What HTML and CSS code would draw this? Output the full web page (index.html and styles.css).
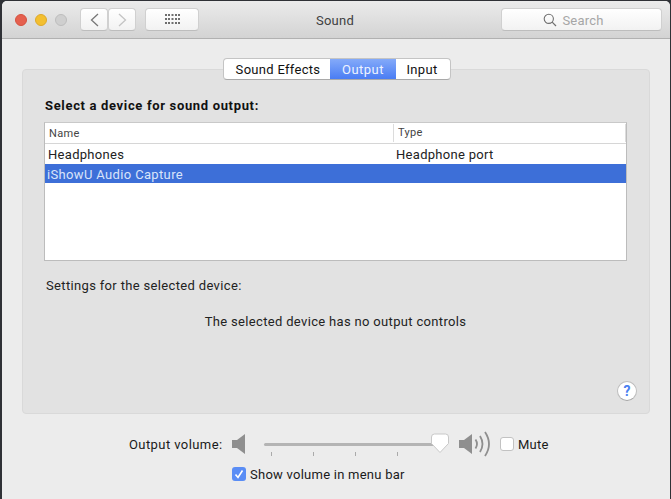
FILE: index.html
```html
<!DOCTYPE html>
<html lang="en">
<head>
<meta charset="utf-8">
<title>Sound</title>
<link rel="stylesheet" href="styles.css">
</head>
<body>
<div class="window">
  <header class="titlebar">
    <div class="lights">
      <span class="light red"></span>
      <span class="light yellow"></span>
      <span class="light grey"></span>
    </div>
    <div class="nav">
      <button class="tool nav-btn"><svg width="9" height="14" viewBox="0 0 9 14"><path d="M8 1 1.5 7 8 13" fill="none" stroke="#777" stroke-width="1.3"/></svg></button>
      <button class="tool nav-btn"><svg width="9" height="14" viewBox="0 0 9 14"><path d="M1 1 7.5 7 1 13" fill="none" stroke="#c4c4c4" stroke-width="1.3"/></svg></button>
    </div>
    <button class="tool grid-btn"><svg width="15" height="11" viewBox="0 0 15 11" fill="#6e6e6e"><rect x="0" y="0" width="2" height="2"/><rect x="3" y="0" width="2" height="2"/><rect x="6.5" y="0" width="2" height="2"/><rect x="10" y="0" width="2" height="2"/><rect x="13" y="0" width="2" height="2"/><rect x="0" y="4" width="2" height="2"/><rect x="3" y="4" width="2" height="2"/><rect x="6.5" y="4" width="2" height="2"/><rect x="10" y="4" width="2" height="2"/><rect x="13" y="4" width="2" height="2"/><rect x="0" y="8" width="2" height="2"/><rect x="3" y="8" width="2" height="2"/><rect x="6.5" y="8" width="2" height="2"/><rect x="10" y="8" width="2" height="2"/><rect x="13" y="8" width="2" height="2"/></svg></button>
    <div class="title">Sound</div>
    <div class="tool search">
      <svg width="14" height="14" viewBox="0 0 14 14"><circle cx="5.8" cy="5.8" r="4.6" fill="none" stroke="#6f6f6f" stroke-width="1.1"/><path d="M9.2 9.2 13 13" stroke="#6f6f6f" stroke-width="1.2"/></svg>
      <span>Search</span>
    </div>
  </header>

  <main class="content">
    <nav class="tabs">
      <span class="tab">Sound Effects</span>
      <span class="tab active">Output</span>
      <span class="tab">Input</span>
    </nav>
    <section class="panel">
      <h2 class="heading">Select a device for sound output:</h2>
      <div class="table">
        <div class="row head">
          <div class="col-name">Name</div>
          <div class="col-type">Type</div>
        </div>
        <div class="row item">
          <div class="col-name">Headphones</div>
          <div class="col-type">Headphone port</div>
        </div>
        <div class="row item selected">
          <div class="col-name">iShowU Audio Capture</div>
          <div class="col-type"></div>
        </div>
      </div>
      <p class="settings">Settings for the selected device:</p>
      <p class="none">The selected device has no output controls</p>
      <div class="help-row"><span class="help">?</span></div>
    </section>

    <div class="volume">
      <span class="vol-label">Output volume:</span>
      <svg class="spk-low" width="14" height="20" viewBox="0 0 14 20"><path d="M0 6h5l8-6v20l-8-6H0z" fill="#8f8f8f"/></svg>
      <div class="slider">
        <div class="track"></div>
        <div class="ticks"><i></i><i></i><i></i><i></i></div>
        <svg class="thumb" width="20" height="21" viewBox="0 0 20 21"><path d="M4.500 1h11A3 3 0 0 1 18.500 4V10.500l-8.500 9-8.500-9V4A3 3 0 0 1 4.500 1z" fill="#fff" stroke="#c8c8c8"/></svg>
      </div>
      <svg class="spk-high" width="32" height="26" viewBox="0 0 32 26"><path d="M0 9h5l8-6v20l-8-6H0z" fill="#8f8f8f"/><path d="M16.500 8.500q3 4.500 0 9M21 5q5 8 0 16M26 1q8 12 0 24" fill="none" stroke="#8f8f8f" stroke-width="1.800"/></svg>
      <label class="check-wrap mute"><span class="check"></span><span>Mute</span></label>
    </div>
    <div class="show">
      <span class="check on"><svg width="14" height="14" viewBox="0 0 14 14"><path d="M3.500 7.500 6 10.500 10.500 3.500" fill="none" stroke="#fff" stroke-width="1.600"/></svg></span>
      <span>Show volume in menu bar</span>
    </div>
  </main>
</div>
</body>
</html>
```
FILE: styles.css
```css
* { box-sizing: border-box; }
html, body { margin: 0; height: 100%; }
body {
  background: #2f3136;
  font-family: Roboto, "Liberation Sans", sans-serif;
  font-size: 13px;
  color: #111;
  overflow: hidden;
}
.window {
  width: 668px;
  height: 498px;
  margin: 1px 0 0 2px;
  background: #ececec;
  border-radius: 5px 5px 0 0;
  overflow: hidden;
}
.titlebar {
  height: 38px;
  display: flex;
  align-items: center;
  padding: 0 8px 0 13px;
  background: linear-gradient(#ebebeb, #d3d3d3);
  border-bottom: 1px solid #b1b1b1;
}
.lights { display: flex; gap: 8px; }
.light { width: 12px; height: 12px; border-radius: 50%; border: 1px solid; }
.red { background: #e5604f; border-color: #d5513f; }
.yellow { background: #f3bf30; border-color: #dea92a; }
.grey { background: #cfcfcf; border-color: #bdbdbd; }
.tool {
  height: 23px;
  padding: 0;
  background: linear-gradient(#fff, #f2f2f2);
  border: 1px solid #d0d0d0;
  border-bottom-color: #bdbdbd;
  border-radius: 4px;
  display: flex;
  align-items: center;
  justify-content: center;
}
.nav { display: flex; margin-left: 13px; }
.nav-btn { width: 28px; }
.grid-btn { width: 54px; margin-left: 9px; }
.title {
  width: 76px;
  margin-left: 98px;
  padding-top: 2px;
  text-align: center;
  font-size: 13px;
  color: #404040;
  letter-spacing: .25px;
}
.search {
  width: 161px;
  margin-left: auto;
  gap: 5px;
  padding-right: 16px;
  color: #a6a6a6;
  font-size: 13px;
  letter-spacing: .2px;
}
.search span { padding-top: 1px; }
.content { display: flex; flex-direction: column; }
.tabs {
  align-self: flex-start;
  margin: 19px 0 -11px 221px;
  height: 22px;
  display: flex;
  background: #fff;
  border: 1px solid #c4c4c4;
  border-bottom-color: #a9a9a9;
  border-radius: 4px;
  overflow: hidden;
  position: relative;
  z-index: 1;
}
.tab {
  display: flex;
  align-items: center;
  justify-content: center;
  width: 106px;
  padding-left: 2px;
  font-size: 13px;
  letter-spacing: .3px;
  color: #111;
}
.tab:nth-child(2) { width: 66px; padding-left: 0; letter-spacing: .5px; }
.tab:nth-child(3) { width: 54px; padding: 0 2px 0 0; }
.tab.active {
  color: #eef3ff;
  background: linear-gradient(#84aaf9, #4a7df4);
}
.panel {
  margin: 0 20px;
  height: 345px;
  background: #e2e2e2;
  border: 1px solid #d9d9d9;
  border-radius: 4px;
  padding: 28px 22px 0 21px;
  display: flex;
  flex-direction: column;
}
.heading {
  margin: 0 0 9px 1px;
  font-size: 13px;
  line-height: 15px;
  font-weight: 700;
  letter-spacing: .66px;
  color: #111;
}
.table {
  height: 139px;
  background: #fff;
  border: 1px solid #bcbcbc;
  border-top-color: #c9c9c9;
}
.row { display: flex; }
.col-name { width: 348px; padding-left: 3px; }
.col-type { flex: 1; padding-left: 3px; }
.head {
  height: 21px;
  align-items: center;
  border-bottom: 1px solid #d6d6d6;
  font-size: 11px;
  color: #444;
  letter-spacing: .3px;
}
.head .col-type { border-left: 1px solid #dcdcdc; height: 18px; line-height: 18px; padding-left: 4px; border-right: 1px solid #dcdcdc; }
.head .col-name { padding-left: 4px; }
.item {
  height: 20px;
  line-height: 20px;
  font-size: 13px;
  letter-spacing: .3px;
  color: #222;
}
.item:nth-child(2) { padding-top: 1px; }
.selected {
  height: 19px;
  line-height: 21px;
  background: #3d6fd8;
  color: #d9e4fa;
}
.selected .col-name { padding-left: 2px; letter-spacing: .35px; }
.settings {
  margin: 17px 0 0 2px;
  line-height: 16px;
  font-size: 13px;
  letter-spacing: .34px;
  color: #222;
}
.none {
  margin: 20px 0 0;
  line-height: 16px;
  text-align: center;
  font-size: 13px;
  letter-spacing: .33px;
  color: #222;
}
.help-row {
  display: flex;
  justify-content: flex-end;
  margin: 51px -10px 0 0;
}
.help {
  width: 20px;
  height: 20px;
  border-radius: 50%;
  background: #fff;
  border: 1px solid #bdbdbd;
  border-bottom-color: #a5a5a5;
  color: #4a80f0;
  font-size: 14px;
  font-weight: 700;
  line-height: 18px;
  text-align: center;
}
.volume {
  display: flex;
  align-items: center;
  height: 26px;
  margin-top: 17px;
  padding-left: 127px;
}
.vol-label { width: 103px; letter-spacing: .42px; color: #1a1a1a; }
.spk-low { margin-right: 18px; }
.slider { position: relative; width: 176px; height: 26px; }
.track { position: absolute; left: 0; right: 0; top: 12px; height: 3px; border-radius: 2px; background: #b4b4b4; }
.ticks { position: absolute; left: 7px; top: 21px; display: flex; gap: 41px; }
.ticks i { display: block; width: 1px; height: 4px; background: #aaa; }
.thumb { position: absolute; left: 166px; top: 2px; }
.spk-high { margin-left: 19px; }
.check-wrap { display: flex; align-items: center; gap: 4px; letter-spacing: .25px; color: #1a1a1a; }
.mute { margin-left: 9px; }
.check {
  width: 14px;
  height: 14px;
  display: block;
  background: #fff;
  border: 1px solid #c2c2c2;
  border-radius: 3px;
}
.check.on { background: #5a8df5; border: 0; }
.check svg { display: block; }
.show {
  display: flex;
  align-items: center;
  gap: 4px;
  margin: 9px 0 0 230px;
  height: 16px;
  letter-spacing: .25px;
  color: #1a1a1a;
}
```
